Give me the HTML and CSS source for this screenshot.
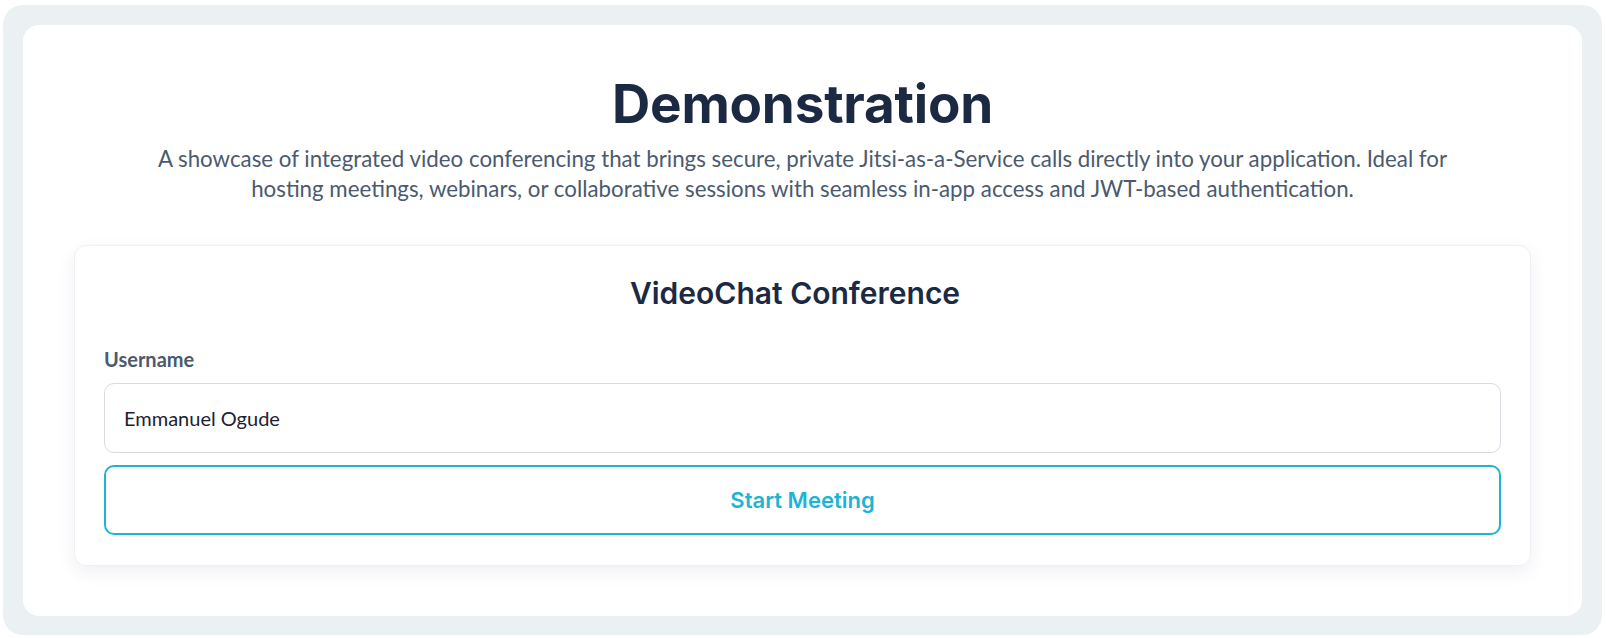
FILE: index.html
```html
<!DOCTYPE html>
<html lang="en">
<head>
<meta charset="utf-8">
<title>Demonstration</title>
<link rel="stylesheet" href="styles.css">
</head>
<body>
<div class="frame">
  <main class="panel">
    <h1 class="title">Demonstration</h1>
    <p class="lead">A showcase of integrated video conferencing that brings secure, private Jitsi-as-a-Service calls directly into your application. Ideal for hosting meetings, webinars, or collaborative sessions with seamless in-app access and JWT-based authentication.</p>
    <section class="card">
      <h2 class="card-title">VideoChat Conference</h2>
      <label class="label" for="username">Username</label>
      <input class="input" id="username" type="text" value="Emmanuel Ogude">
      <button class="btn" type="button">Start Meeting</button>
    </section>
  </main>
</div>
</body>
</html>
```

FILE: styles.css
```css
* { box-sizing: border-box; }
html, body { margin: 0; padding: 0; background: #ffffff; }
body { padding: 5px 4px 3px 3px; }
.frame {
  background: #ebf0f3;
  border-radius: 20px;
  padding: 20px;
  height: 630px;
}
.panel {
  background: #ffffff;
  border-radius: 16px;
  height: 591px;
  padding: 47px 51px 52px;
  display: flex;
  flex-direction: column;
  align-items: stretch;
}
.title {
  margin: 0;
  text-align: center;
  font-family: "Inter", "Liberation Sans", sans-serif;
  font-weight: 700;
  font-size: 53px;
  line-height: 64px;
  color: #1b2942;
  letter-spacing: -0.2px;
}
.lead {
  margin: 8px auto 0;
  max-width: 1330px;
  text-align: center;
  font-family: "Lato", "Liberation Sans", sans-serif;
  font-size: 22.3px;
  line-height: 30px;
  color: #4b5a6f;
}
.card {
  margin-top: 41px;
  border: 1px solid #eef0f3;
  border-radius: 12px;
  background: #ffffff;
  box-shadow: 0 6px 18px rgba(30, 45, 80, 0.07);
  padding: 29px 29px 30px;
  display: flex;
  flex-direction: column;
}
.card-title {
  margin: 0 0 33px;
  padding-right: 15px;
  text-align: center;
  font-family: "Inter", "Liberation Sans", sans-serif;
  font-weight: 600;
  font-size: 30px;
  line-height: 36px;
  color: #1b2942;
}
.label {
  font-family: "Lato", "Liberation Sans", sans-serif;
  font-weight: 700;
  font-size: 20px;
  line-height: 30px;
  color: #4b5a6f;
  margin-bottom: 9px;
}
.input {
  height: 70px;
  border: 1px solid #d9dbe3;
  border-radius: 10px;
  padding: 0 19px;
  font-family: "Lato", "Liberation Sans", sans-serif;
  font-size: 20px;
  color: #1b2235;
  background: #fff;
  outline: none;
}
.btn {
  margin-top: 12px;
  height: 70px;
  border: 2px solid #1db4d6;
  border-radius: 10px;
  background: #fff;
  color: #1db4d6;
  font-family: "Inter", "Liberation Sans", sans-serif;
  font-weight: 600;
  font-size: 22px;
  cursor: pointer;
}
```
